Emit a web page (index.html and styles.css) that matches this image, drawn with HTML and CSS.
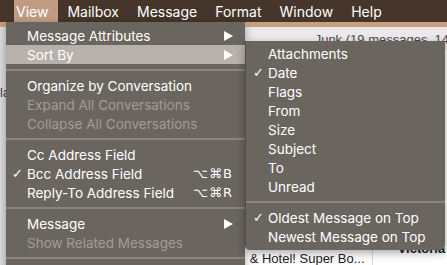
FILE: index.html
```html
<!DOCTYPE html>
<html lang="en">
<head>
    <meta charset="UTF-8">
    <title>Mail - View menu</title>
    <link rel="stylesheet" href="styles.css">
</head>
<body>
    <div class="desktop">
        <nav class="menubar">
            <span class="menubar-item active">View</span>
            <span class="menubar-item">Mailbox</span>
            <span class="menubar-item">Message</span>
            <span class="menubar-item">Format</span>
            <span class="menubar-item">Window</span>
            <span class="menubar-item">Help</span>
        </nav>

        <!-- Mail window behind the menus -->
        <div class="window">
            <div class="side-strip"><span>la</span></div>
            <div class="window-main">
                <div class="window-title">Junk (19 messages, 14 unread)</div>
                <div class="message-list"></div>
                <div class="message-row">
                    <span class="subject">&amp; Hotel! Super Bo...</span>
                    <span class="sender">Victoria S</span>
                </div>
            </div>
        </div>

        <!-- View menu -->
        <div class="menu view-menu">
            <div class="menu-item"><span class="check"></span><span class="label">Message Attributes</span><span class="arrow"><svg width="9" height="10" viewBox="0 0 9 10"><path d="M0 0 L9 5 L0 10 Z" fill="#fff"/></svg></span></div>
            <div class="menu-item selected"><span class="check"></span><span class="label">Sort By</span><span class="arrow"><svg width="9" height="10" viewBox="0 0 9 10"><path d="M0 0 L9 5 L0 10 Z" fill="#fff"/></svg></span></div>
            <div class="separator"></div>
            <div class="menu-item"><span class="check"></span><span class="label">Organize by Conversation</span></div>
            <div class="menu-item disabled"><span class="check"></span><span class="label">Expand All Conversations</span></div>
            <div class="menu-item disabled"><span class="check"></span><span class="label">Collapse All Conversations</span></div>
            <div class="separator"></div>
            <div class="menu-item"><span class="check"></span><span class="label">Cc Address Field</span></div>
            <div class="menu-item"><span class="check">✓</span><span class="label">Bcc Address Field</span><span class="shortcut">⌥⌘B</span></div>
            <div class="menu-item"><span class="check"></span><span class="label">Reply-To Address Field</span><span class="shortcut">⌥⌘R</span></div>
            <div class="separator"></div>
            <div class="menu-item"><span class="check"></span><span class="label">Message</span><span class="arrow"><svg width="9" height="10" viewBox="0 0 9 10"><path d="M0 0 L9 5 L0 10 Z" fill="#fff"/></svg></span></div>
            <div class="menu-item disabled"><span class="check"></span><span class="label">Show Related Messages</span></div>
            <div class="separator"></div>
        </div>

        <!-- Sort By submenu -->
        <div class="menu submenu">
            <div class="menu-item"><span class="check"></span><span class="label">Attachments</span></div>
            <div class="menu-item"><span class="check">✓</span><span class="label">Date</span></div>
            <div class="menu-item"><span class="check"></span><span class="label">Flags</span></div>
            <div class="menu-item"><span class="check"></span><span class="label">From</span></div>
            <div class="menu-item"><span class="check"></span><span class="label">Size</span></div>
            <div class="menu-item"><span class="check"></span><span class="label">Subject</span></div>
            <div class="menu-item"><span class="check"></span><span class="label">To</span></div>
            <div class="menu-item"><span class="check"></span><span class="label">Unread</span></div>
            <div class="separator"></div>
            <div class="menu-item"><span class="check">✓</span><span class="label">Oldest Message on Top</span></div>
            <div class="menu-item"><span class="check"></span><span class="label">Newest Message on Top</span></div>
        </div>
    </div>
</body>
</html>
```

FILE: styles.css
```css
body {
    margin: 0;
    font-family: 'Inter', 'DejaVu Sans', sans-serif;
    font-size: 14px;
    color: #fff;
    overflow: hidden;
}
.desktop {
    position: relative;
    width: 447px;
    height: 265px;
    background-color: #c99f82;
    overflow: hidden;
}

/* Menu bar */
.menubar {
    display: flex;
    height: 22px;
    background-color: #45352a;
    align-items: stretch;
}
.menubar-item {
    display: flex;
    align-items: center;
    padding: 0 9px;
}
.menubar-item.active {
    background-color: #c19c83;
    margin-left: 14px;
    padding: 0 10px 0 2px;
}

/* Window behind */
.window {
    display: flex;
    margin-top: 5px;
    height: 238px;
}
.side-strip {
    width: 10px;
    background-color: #dcdcdc;
    color: #333;
    font-size: 12px;
    padding-top: 58px;
}
.window-main {
    flex: 1;
    display: flex;
    flex-direction: column;
    background-color: #fff;
}
.window-title {
    height: 18px;
    padding-left: 305px;
    padding-top: 5px;
    background-color: #ebe9eb;
    color: #4a4a4a;
    font-family: 'Liberation Sans', sans-serif;
    font-size: 13px;
    line-height: 16px;
    white-space: nowrap;
}
.message-list {
    flex: 1;
    border-right: 2px solid #3a8ed8;
}
.message-row {
    display: flex;
    height: 16px;
    padding-left: 240px;
    color: #222;
    font-family: 'Liberation Sans', sans-serif;
    font-size: 13px;
    white-space: nowrap;
}
.subject {
    width: 122px;
    border-right: 1px solid #d5d5d5;
    padding-top: 2px;
}
.sender {
    padding-left: 25px;
    font-weight: 700;
    margin-top: -8px;
}

/* Menus */
.menu {
    position: absolute;
    background-color: #6b6560;
    box-shadow: 0 3px 8px rgba(0, 0, 0, 0.35);
    font-size: 13.5px;
}
.view-menu {
    left: 6px;
    top: 22px;
    width: 239px;
    padding-top: 4px;
    height: 260px;
}
.submenu {
    left: 245px;
    top: 41px;
    width: 200px;
    padding: 3px 0 4px;
    border-radius: 0 0 5px 5px;
    border-left: 1px solid #4f4a46;
    box-sizing: border-box;
}
.menu-item {
    display: grid;
    grid-template-columns: 15px 1fr auto;
    align-items: center;
    height: 19px;
    padding: 0 12px 0 6px;
    white-space: nowrap;
}
.submenu .menu-item {
    padding-left: 7px;
}
.menu-item.selected {
    background-color: #b8b1ab;
}
.menu-item.disabled {
    color: #a29c97;
}
.check {
    font-family: 'DejaVu Sans', sans-serif;
    font-size: 13px;
    font-weight: 700;
    text-align: left;
}
.arrow {
    display: flex;
    align-items: center;
}
.shortcut {
    font-family: 'DejaVu Sans', sans-serif;
    font-size: 13px;
    letter-spacing: 1px;
}
.separator {
    height: 12px;
    display: flex;
    align-items: center;
}
.separator::before {
    content: "";
    flex: 1;
    height: 2px;
    background-color: #8a847f;
}
```
